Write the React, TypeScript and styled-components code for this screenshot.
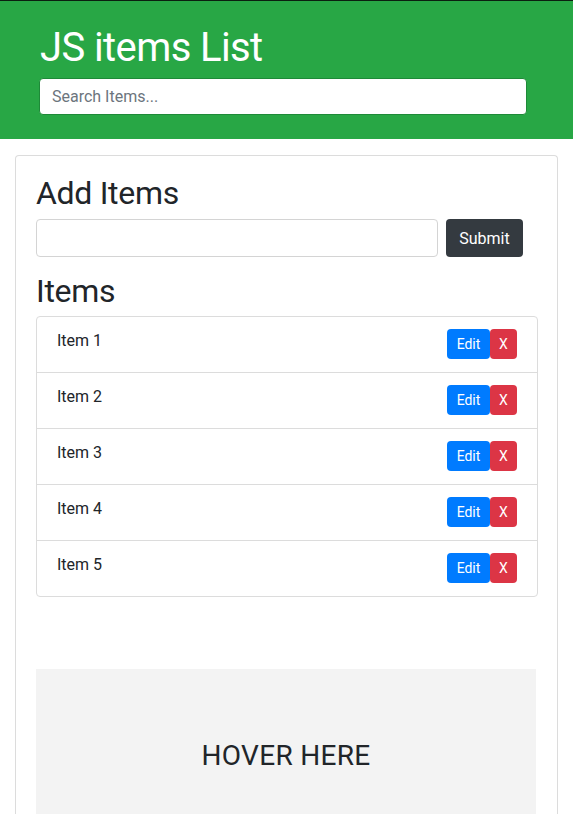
import React from "react";
import styled, { createGlobalStyle } from "styled-components";

const Global = createGlobalStyle`
  html, body { margin: 0; padding: 0; background: #fff; }
  body {
    font-family: Roboto, "Liberation Sans", Arial, sans-serif;
    color: #212529;
    font-size: 16px;
    line-height: 1.5;
  }
  * { box-sizing: border-box; }
`;

const Header = styled.header`
  background: #28a745;
  border-top: 1px solid #0b1f10;
  padding: 23px 46px 24px 39px;
`;

const Title = styled.h1`
  margin: 0 0 6px 1px;
  font-size: 40px;
  font-weight: 400;
  line-height: 48px;
  letter-spacing: -0.6px;
  color: #fff;
`;

const SearchInput = styled.input`
  display: block;
  width: 100%;
  height: 37px;
  padding: 6px 12px;
  font-family: inherit;
  font-size: 16px;
  color: #495057;
  background: #fff;
  border: 1px solid #1e8a38;
  border-radius: 4px;
  outline: none;
  &::placeholder { color: #6c757d; }
`;

const Container = styled.main`
  padding: 16px 15px 0;
`;

const Card = styled.section`
  border: 1px solid #dcdcdc;
  border-bottom: none;
  border-radius: 4px 4px 0 0;
  padding: 18px 19px 0 20px;
`;

const Heading = styled.h2<{ $gap: number }>`
  margin: 0 0 ${(p) => p.$gap}px;
  font-size: 32px;
  font-weight: 400;
  line-height: 38px;
  letter-spacing: -0.3px;
`;

const AddForm = styled.form`
  display: flex;
  gap: 8px;
  margin-bottom: 15px;
`;

const AddInput = styled.input`
  width: 402px;
  height: 38px;
  border: 1px solid #d4d4d4;
  border-radius: 4px;
  padding: 6px 12px;
  font-size: 16px;
  outline: none;
`;

const SubmitButton = styled.button`
  width: 77px;
  height: 38px;
  border: none;
  border-radius: 4px;
  background: #343a40;
  color: #fff;
  font-family: inherit;
  font-size: 16px;
`;

const List = styled.ul`
  list-style: none;
  margin: 0;
  padding: 0;
  border: 1px solid #dcdcdc;
  border-radius: 4px;
`;

const Row = styled.li<{ $last?: boolean }>`
  display: flex;
  justify-content: space-between;
  align-items: flex-start;
  height: ${(p) => (p.$last ? "55px" : "56px")};
  padding: 12px 20px 0 20px;
  border-bottom: ${(p) => (p.$last ? "none" : "1px solid #dcdcdc")};
`;

const ItemName = styled.span`
  font-size: 16px;
  line-height: 24px;
  color: #212529;
`;

const Buttons = styled.div`
  display: flex;
`;

const SmallButton = styled.button<{ $variant: "edit" | "delete" }>`
  height: 30px;
  padding: 0 8px;
  min-width: ${(p) => (p.$variant === "edit" ? "43px" : "27px")};
  border: none;
  border-radius: 4px;
  background: ${(p) => (p.$variant === "edit" ? "#007bff" : "#dc3545")};
  color: #fff;
  font-family: inherit;
  font-size: 14px;
  line-height: 30px;
`;

const HoverBox = styled.div`
  width: 500px;
  height: 174px;
  margin-top: 72px;
  background: #f3f3f3;
  display: flex;
  align-items: center;
  justify-content: center;
  font-size: 28px;
  letter-spacing: 0.3px;
  color: #212529;
`;

const items = ["Item 1", "Item 2", "Item 3", "Item 4", "Item 5"];

export default function App() {
  return (
    <>
      <Global />
      <Header>
        <Title>JS items List</Title>
        <SearchInput placeholder="Search Items..." />
      </Header>
      <Container>
        <Card>
          <Heading $gap={7}>Add Items</Heading>
          <AddForm onSubmit={(e) => e.preventDefault()}>
            <AddInput />
            <SubmitButton type="submit">Submit</SubmitButton>
          </AddForm>
          <Heading $gap={6}>Items</Heading>
          <List>
            {items.map((it, i) => (
              <Row key={it} $last={i === items.length - 1}>
                <ItemName>{it}</ItemName>
                <Buttons>
                  <SmallButton $variant="edit">Edit</SmallButton>
                  <SmallButton $variant="delete">X</SmallButton>
                </Buttons>
              </Row>
            ))}
          </List>
          <HoverBox>HOVER HERE</HoverBox>
        </Card>
      </Container>
    </>
  );
}
